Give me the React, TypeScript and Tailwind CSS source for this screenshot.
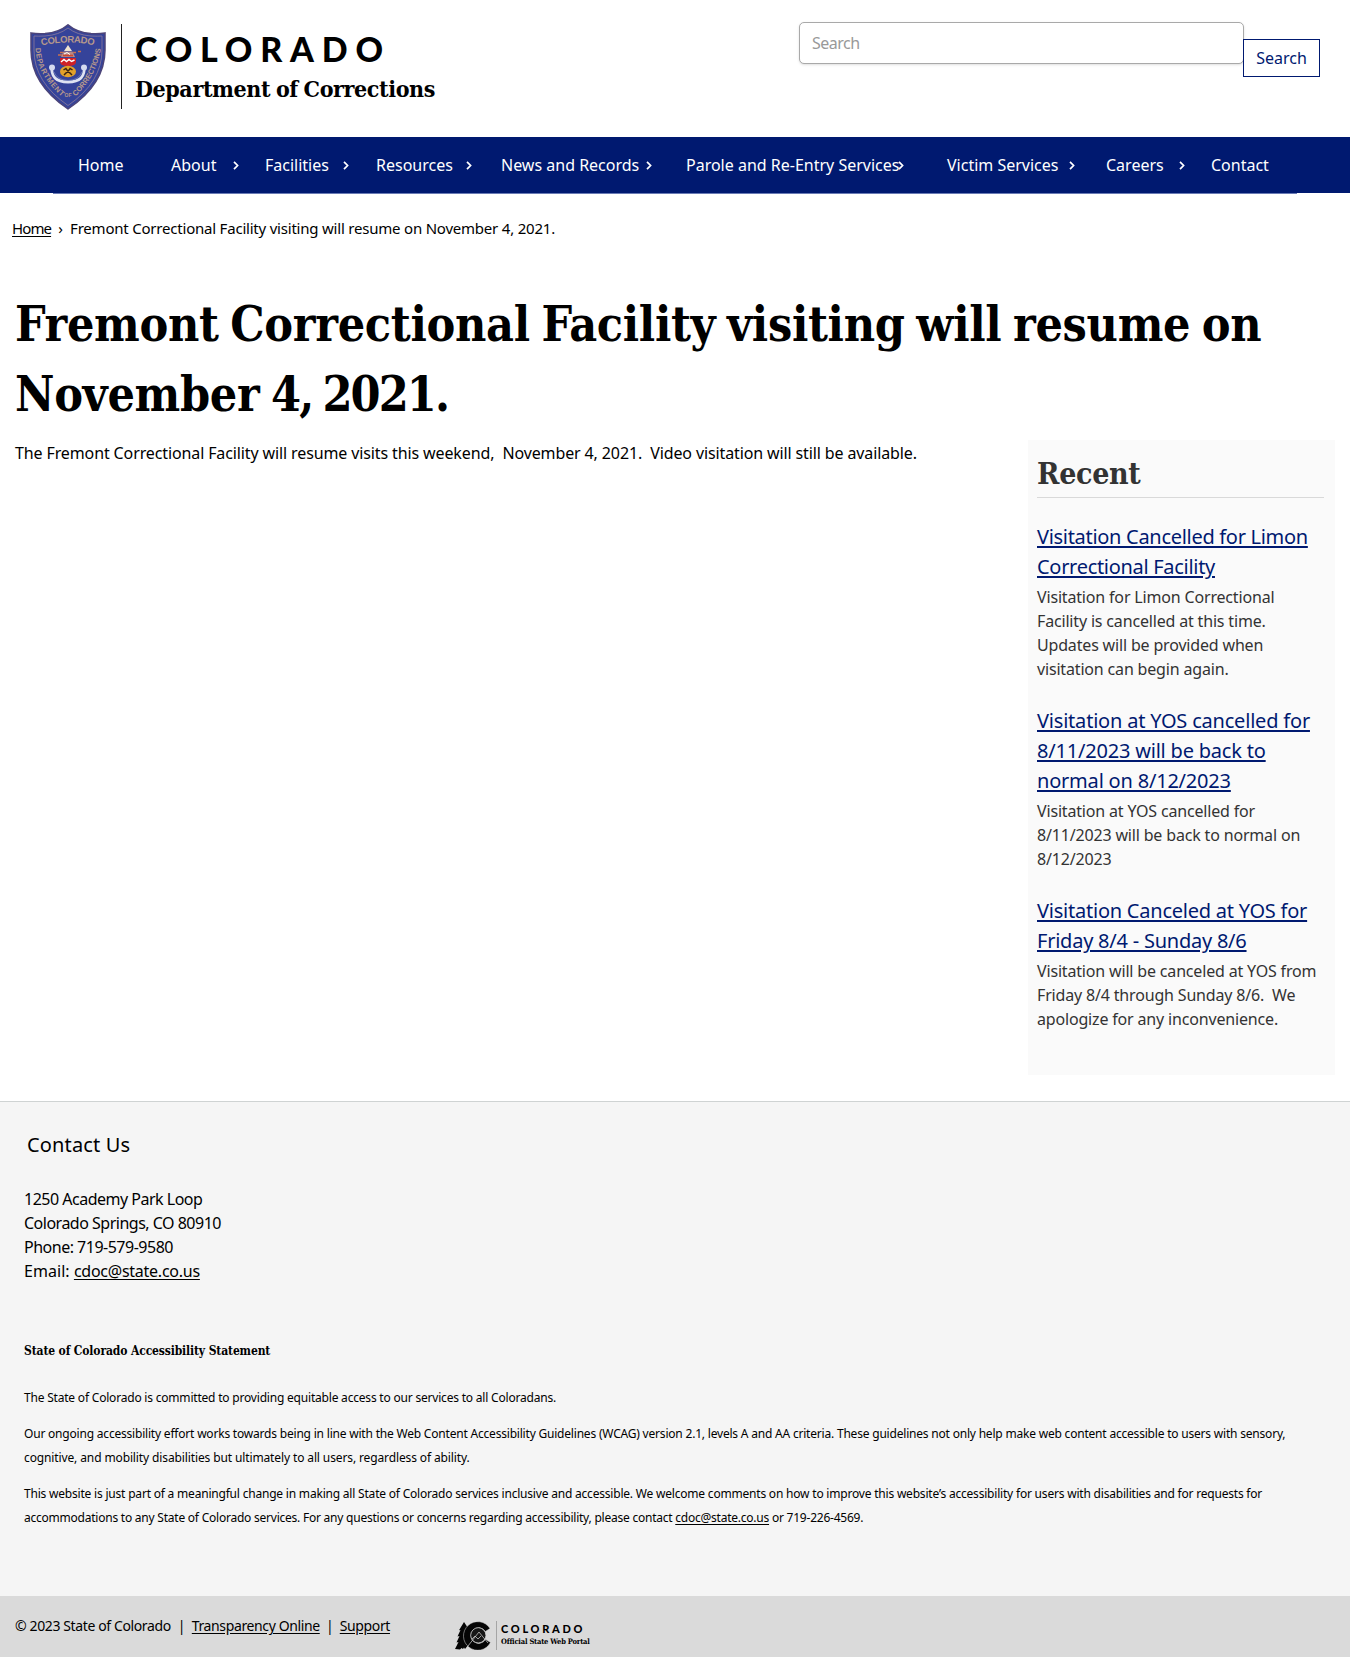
import type { ReactNode } from 'react';

const slab = "font-['DejaVu_Serif_Condensed','DejaVu_Serif',serif] font-bold";

type NavItem = { label: string; box: string; arrow: boolean };

const navItems: NavItem[] = [
  { label: 'Home', box: 'w-[93px]', arrow: false },
  { label: 'About', box: 'w-[94px] pr-[26px]', arrow: true },
  { label: 'Facilities', box: 'w-[111px] pr-[27px]', arrow: true },
  { label: 'Resources', box: 'w-[125px] pr-[29px]', arrow: true },
  { label: 'News and Records', box: 'w-[185px] pr-[34px]', arrow: true },
  { label: 'Parole and Re-Entry Services', box: 'w-[261px] pr-[43px]', arrow: true },
  { label: 'Victim Services', box: 'w-[159px] pr-[31px]', arrow: true },
  { label: 'Careers', box: 'w-[105px] pr-[26px]', arrow: true },
  { label: 'Contact', box: 'w-[84px]', arrow: false },
];

const recent = [
  {
    title: ['Visitation Cancelled for Limon', 'Correctional Facility'],
    tracking: 'tracking-[-0.3px]',
    body: [
      'Visitation for Limon Correctional',
      'Facility is cancelled at this time.',
      'Updates will be provided when',
      'visitation can begin again.',
    ],
  },
  {
    title: ['Visitation at YOS cancelled for', '8/11/2023 will be back to', 'normal on 8/12/2023'],
    tracking: 'tracking-[-0.2px]',
    body: ['Visitation at YOS cancelled for', '8/11/2023 will be back to normal on', '8/12/2023'],
  },
  {
    title: ['Visitation Canceled at YOS for', 'Friday 8/4 - Sunday 8/6'],
    tracking: 'tracking-[-0.23px]',
    body: [
      'Visitation will be canceled at YOS from',
      'Friday 8/4 through Sunday 8/6.\u00a0 We',
      'apologize for any inconvenience.',
    ],
  },
];

function Lines({ text }: { text: string[] }) {
  return (
    <>
      {text.map((line) => (
        <span key={line} className="block whitespace-nowrap">
          {line}
        </span>
      ))}
    </>
  );
}

function Link({ children, className = '' }: { children: ReactNode; className?: string }) {
  return (
    <a href="#" className={`underline underline-offset-2 ${className}`}>
      {children}
    </a>
  );
}

function Chevron() {
  return (
    <svg className="mt-px h-[9px] w-[6px] shrink-0" viewBox="0 0 6 9" fill="none" stroke="#fff" strokeWidth="1.7">
      <path d="M1 .8 4.6 4.5 1 8.2" />
    </svg>
  );
}

function Shield() {
  return (
    <svg className="h-[86px] w-[76px] shrink-0" viewBox="0 0 76 86">
      <defs>
        <path id="arcTop" d="M11.5 21.5 Q38 15.5 65 21.5" />
        <path id="arcLeft" d="M5.5 24 Q6 50 32 73" />
        <path id="arcRight" d="M45.5 72.500 Q67.500 51 71 23" />
      </defs>
      <path
        d="M38 .8 Q29 8.500 15 9.600 Q7 10 1 9 V26 Q1 60 38 85 Q75 60 75 26 V9 Q69 10 61 9.600 Q47 8.500 38 .8Z"
        fill="#35439a"
        stroke="#4c4479"
        strokeWidth="1.5"
      />
      <path
        d="M38 4 Q29 11 15 12 Q8 12.400 4 12 V26 Q4 58 38 81.500 Q72 58 72 26 V12 Q68 12.400 61 12 Q47 11 38 4Z"
        fill="none"
        stroke="#83759a"
        strokeWidth=".9"
      />
      <g fill="#b5988c" fontFamily="Liberation Sans" fontWeight="700">
        <text fontSize="9.500">
          <textPath href="#arcTop" textLength="53">
            COLORADO
          </textPath>
        </text>
        <text fontSize="7.500">
          <textPath href="#arcLeft" textLength="57">
            DEPARTMENT
          </textPath>
        </text>
        <text fontSize="7.500">
          <textPath href="#arcRight" textLength="55">
            CORRECTIONS
          </textPath>
        </text>
        <text x="38" y="73" fontSize="5" textAnchor="middle">
          OF
        </text>
      </g>
      <path d="M22 42 Q20 58 38 58 Q56 58 54 42" fill="none" stroke="#dfe3f2" strokeWidth="2.800" />
      <circle cx="22" cy="43.500" r="3" fill="#d5daf0" />
      <circle cx="54" cy="43.500" r="3" fill="#d5daf0" />
      <path d="M24 48 Q27 56 38 56.500 Q49 56 52 48" fill="none" stroke="#6f7fbd" strokeWidth=".8" />
      <path d="M38 21 42 27 H34Z" fill="#efe3cf" />
      <path d="M28 31 H34 M30 28.500 H33 M43 28.500 H46 M48 27.500 H51" stroke="#c9714f" strokeWidth="1.500" />
      <path d="M33.500 27.500 H42.500 L45 33 H31Z" fill="#b98a86" />
      <path d="M33 31.500h10" stroke="#d0452e" strokeWidth="1.600" />
      <path d="m34 30 3-1.500 3 2" fill="none" stroke="#fff" />
      <path d="M30 34 H46 V38 Q46 42 38 42 Q30 42 30 38Z" fill="#cf2027" />
      <path d="m31 38 3-2.500 2.500 2 2.500-2 2.500 2 3-1.500" fill="none" stroke="#fff" strokeWidth="1.400" />
      <ellipse cx="38" cy="47.500" rx="8" ry="5.800" fill="#e2a12b" />
      <path d="m34 51 6-6 M42 51l-6-6 M33.500 46l3-2 M42.500 46l-3-2" stroke="#3a2412" strokeWidth="1.500" />
    </svg>
  );
}

function PortalMark() {
  return (
    <svg className="h-[29px] w-[37px] shrink-0" viewBox="0 0 37 29">
      <path
        d="M0 28 3.500 21 1.500 21.500 4.500 15 2.500 15.500 5.500 9 4 9.300 9 1l4 6-1.500.5L14 13v10l-4 5-1-1.500L8 28 6.500 27 5 28.500Z"
        fill="#050505"
      />
      <path
        d="M35 7.500A14.300 14.300 0 1 0 35.500 21.500l-5-3.200a7.800 7.800 0 1 1-.2-7.800Z"
        fill="#050505"
        stroke="#dadada"
        strokeWidth=".5"
      />
      <circle cx="23.300" cy="14.300" r="7.600" fill="#161616" stroke="#d5d5d5" strokeWidth=".7" />
      <path d="m13 25 7-9 4-5 4 5 5 6M17 18l3-3 3 3 3-3" fill="none" stroke="#d5d5d5" strokeWidth=".7" />
    </svg>
  );
}

export default function App() {
  return (
    <div className="min-h-[1657px] w-[1350px] overflow-hidden bg-white font-['Noto_Sans',sans-serif] text-base text-black">
      <header className="flex h-[137px] items-start justify-between pr-[30px] pl-[30px]">
        <div className="flex pt-[24px]">
          <Shield />
          <div className="ml-[15px] h-[85px] w-px bg-[#222]" />
          <div className="ml-[13px]">
            <div className="mt-[5px] font-['Lato',sans-serif] text-[34px] leading-[40px] font-black tracking-[7.8px] whitespace-nowrap">
              COLORADO
            </div>
            <div className={`${slab} mt-[2px] text-[23px] leading-[36px] tracking-[-0.4px] [word-spacing:-1px] whitespace-nowrap`}>
              Department of Corrections
            </div>
          </div>
        </div>
        <form className="flex items-start pt-[22px]">
          <input
            type="text"
            placeholder="Search"
            className="h-[42px] w-[445px] rounded-[5px] border border-[#a9a9a9] bg-white px-3 tracking-[-0.5px] shadow-sm placeholder:text-[#999]"
          />
          <button
            type="button"
            className="mt-[17px] -ml-px h-[38px] w-[77px] border border-[#001970] bg-white text-[#001970]"
          >
            Search
          </button>
        </form>
      </header>

      <nav className="flex h-[56px] items-center bg-[#001970] pl-[78px] text-white">
        {navItems.map(({ label, box, arrow }) => (
          <a key={label} href="#" className={`flex shrink-0 items-center justify-between whitespace-nowrap ${box}`}>
            <span className="w-0">{label}</span>
            {arrow && <Chevron />}
          </a>
        ))}
      </nav>
      <div className="mx-[53px] h-px bg-[#6a7bb5]" />

      <div className="flex h-[94px] items-start pt-[22px] pl-3 text-[15px] leading-6 tracking-[-0.21px]">
        <Link className="tracking-[-0.9px]">Home</Link>
        <span className="w-[19px] text-center">›</span>
        <span>Fremont Correctional Facility visiting will resume on November 4, 2021.</span>
      </div>

      <main className="h-[813px] px-[15px] pt-px">
        <h1
          className={`${slab} h-[140px] text-[48px] leading-[70px] tracking-[-0.33px] whitespace-nowrap [word-spacing:-3px]`}
        >
          Fremont Correctional Facility visiting will resume on
          <br />
          November <span className="tracking-[-1.9px]">4, 2021.</span>
        </h1>
        <div className="mt-[11px] flex items-start justify-between">
          <p className="mt-px leading-6 tracking-[-0.12px] whitespace-pre">
            The Fremont Correctional Facility will resume visits this weekend,{'  '}November 4, 2021.{'  '}Video
            visitation will still be available.
          </p>
          <aside className="h-[635px] w-[307px] bg-[#fafafa] pt-[10px] pr-[11px] pl-[9px] text-[#333]">
            <h2 className={`${slab} h-[48px] border-b border-[#d9d9d9] text-[30px] leading-[47px] tracking-[-0.3px]`}>
              Recent
            </h2>
            <div className="mt-[24px] flex flex-col gap-[25px]">
              {recent.map(({ title, tracking, body }) => (
                <article key={title[0]}>
                  <h3 className={`text-xl leading-[30px] text-[#001970] ${tracking}`}>
                    <Link>
                      <Lines text={title} />
                    </Link>
                  </h3>
                  <p className="mt-[3px] leading-6 tracking-[-0.17px]">
                    <Lines text={body} />
                  </p>
                </article>
              ))}
            </div>
          </aside>
        </div>
      </main>

      <footer>
        <section className="h-[495px] border-t border-[#cfd3d3] bg-[#f5f5f5] pt-[28px] pl-6">
          <h2 className="pl-[3px] text-xl leading-[30px] tracking-[0.15px]">Contact Us</h2>
          <address className="mt-[27px] leading-6 tracking-[-0.5px] not-italic">
            <Lines text={['1250 Academy Park Loop', 'Colorado Springs, CO 80910', 'Phone: 719-579-9580']} />
            <span className="tracking-[0.05px]">Email: </span>
            <Link className="tracking-[-0.25px]">cdoc@state.co.us</Link>
          </address>
          <h3 className={`${slab} mt-[56px] text-xs leading-6 tracking-[-0.13px]`}>
            State of Colorado Accessibility Statement
          </h3>
          <div className="mt-[23px] flex flex-col gap-3 text-xs leading-6 tracking-[-0.2px]">
            <p>The State of Colorado is committed to providing equitable access to our services to all Coloradans.</p>
            <div className="whitespace-nowrap">
              <p>
                Our ongoing accessibility effort works towards being in line with the Web Content Accessibility
                Guidelines (WCAG) version 2.1, levels A and AA criteria. These guidelines not only help make web
                content accessible to users with sensory,
              </p>
              <p className="tracking-[-0.12px]">
                cognitive, and mobility disabilities but ultimately to all users, regardless of ability.
              </p>
            </div>
            <div className="whitespace-nowrap">
              <p>
                This website is just part of a meaningful change in making all State of Colorado services inclusive
                and accessible. We welcome comments on how to improve this website’s accessibility for users with
                disabilities and for requests for
              </p>
              <p className="tracking-[-0.23px]">
                accommodations to any State of Colorado services. For any questions or concerns regarding
                accessibility, please contact <Link>cdoc@state.co.us</Link> or 719-226-4569.
              </p>
            </div>
          </div>
        </section>
        <div className="flex h-[61px] items-start bg-[#dadada] pl-[15px]">
          <div className="mt-[18px] flex w-[440px] text-sm leading-6 tracking-[-0.38px]">
            <span>© 2023 State of Colorado</span>
            <span className="w-[21px] text-center">|</span>
            <Link>Transparency Online</Link>
            <span className="w-[20px] text-center">|</span>
            <Link>Support</Link>
          </div>
          <div className="mt-[25px] flex">
            <PortalMark />
            <div className="ml-[4px] h-[29px] w-px bg-[#a5a5a5]" />
            <div className="ml-[4px]">
              <div className="mt-px font-['Lato',sans-serif] text-[11px] leading-[14px] font-black tracking-[2.7px]">
                COLORADO
              </div>
              <div className={`${slab} text-[7.500px] leading-[12px] tracking-[-0.2px] whitespace-nowrap`}>
                Official State Web Portal
              </div>
            </div>
          </div>
        </div>
      </footer>
    </div>
  );
}
